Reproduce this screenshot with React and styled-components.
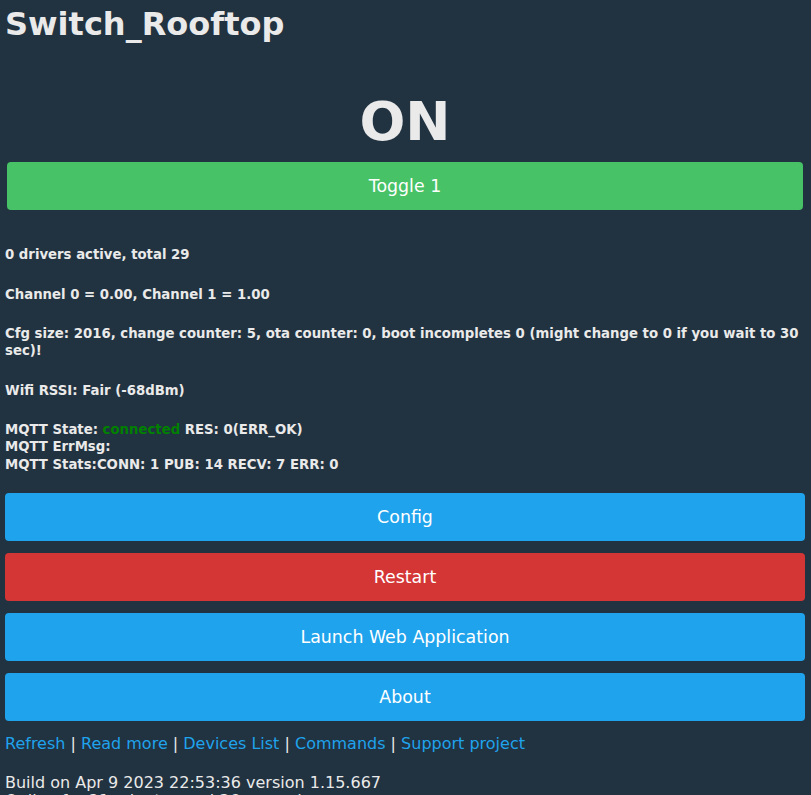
import styled, { createGlobalStyle } from "styled-components";

const GlobalStyle = createGlobalStyle`
  html, body {
    margin: 0;
    padding: 0;
    background: #213240;
  }
  body {
    color: #eaeaea;
    font-family: "DejaVu Sans", Verdana, sans-serif;
  }
`;

export default function App() {
  const stats = [
    ["0 drivers active, total 29"],
    ["Channel 0 = 0.00, Channel 1 = 1.00"],
    ["Cfg size: 2016, change counter: 5, ota counter: 0, boot incompletes 0 (might change to 0 if you wait to 30 sec)!"],
    ["Wifi RSSI: Fair (-68dBm)"],
  ];

  const links = ["Refresh", "Read more", "Devices List", "Commands", "Support project"];

  return (
    <>
      <GlobalStyle />
      <Page>
        <Title>Switch_Rooftop</Title>
        <StateTable>
          <StateText>ON</StateText>
          <Button color="#47c266">Toggle 1</Button>
        </StateTable>
        <Stats>
          {stats.map((s) => (
            <StatLine key={s[0]}>{s[0]}</StatLine>
          ))}
          <StatLine>
            MQTT State: <Connected>connected</Connected> RES: 0(ERR_OK)
            <br />
            MQTT ErrMsg:
            <br />
            MQTT Stats:CONN: 1 PUB: 14 RECV: 7 ERR: 0
          </StatLine>
        </Stats>
        <Buttons>
          <Button color="#1fa3ec">Config</Button>
          <Button color="#d43535">Restart</Button>
          <Button color="#1fa3ec">Launch Web Application</Button>
          <Button color="#1fa3ec">About</Button>
        </Buttons>
        <Links>
          {links.map((l, i) => (
            <span key={l}>
              {i > 0 && " | "}
              <Link href="#">{l}</Link>
            </span>
          ))}
        </Links>
        <Footer>
          Build on Apr 9 2023 22:53:36 version 1.15.667
          <br />
          Online for 21 minutes and 36 seconds
        </Footer>
      </Page>
    </>
  );
}

const Page = styled.div`
  padding: 6px 6px 0 5px;
`;

const Title = styled.h1`
  margin: 0;
  font-size: 32px;
  font-weight: bold;
  line-height: 37px;
`;

const StateTable = styled.div`
  display: flex;
  flex-direction: column;
  padding: 0 2px;
  margin-top: 47px;
`;

const StateText = styled.div`
  text-align: center;
  font-size: 54px;
  font-weight: bold;
  line-height: 63px;
  margin-bottom: 9px;
`;

const Button = styled.button`
  display: block;
  width: 100%;
  height: 48px;
  border: 0;
  border-radius: 4px;
  background: ${(p) => p.color};
  color: #fff;
  font-family: "DejaVu Sans", Verdana, sans-serif;
  font-size: 17.4px;
  line-height: 48px;
  padding: 0;
  cursor: pointer;
`;

const Stats = styled.div`
  margin-top: 36px;
`;

const StatLine = styled.h5`
  margin: 0 0 22.3px;
  font-size: 13.28px;
  font-weight: bold;
  line-height: 17.2px;

  &:last-child {
    margin-bottom: 20px;
  }
`;

const Connected = styled.span`
  color: #008000;
`;

const Buttons = styled.div`
  display: flex;
  flex-direction: column;
  gap: 12px;
`;

const Links = styled.div`
  margin-top: 13px;
  font-size: 16px;
  line-height: 19px;
`;

const Link = styled.a`
  color: #1fa3ec;
  text-decoration: none;
`;

const Footer = styled.div`
  margin-top: 21px;
  font-size: 16px;
  line-height: 18.6px;
`;
